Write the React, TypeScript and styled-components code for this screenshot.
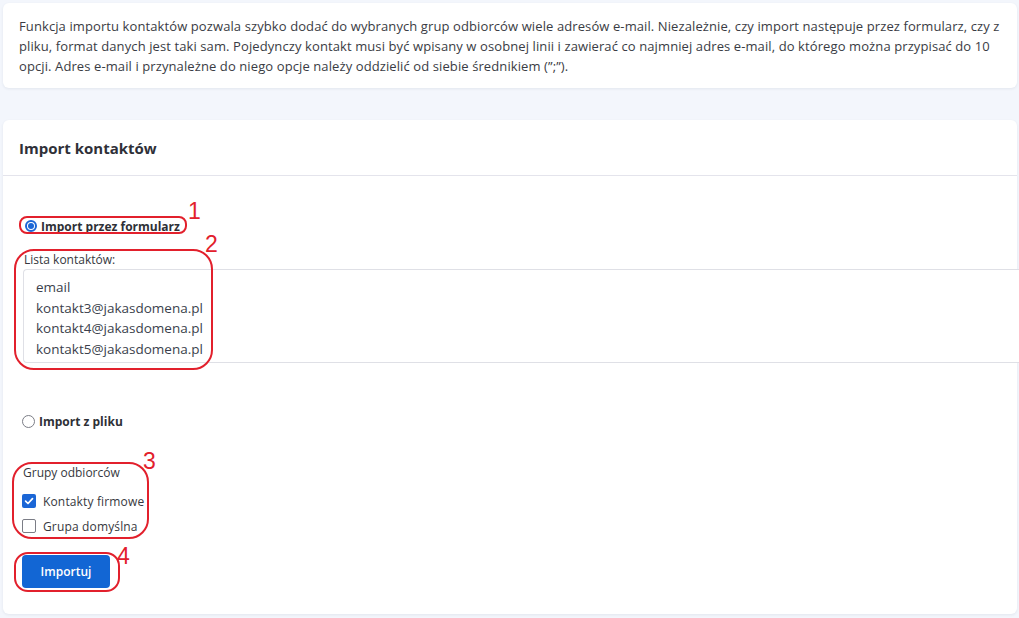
import React from "react";
import styled, { createGlobalStyle } from "styled-components";

const GlobalStyle = createGlobalStyle`
  html, body { margin: 0; padding: 0; }
  body {
    background: #f3f6fc;
    font-family: "Open Sans", "Noto Sans", "DejaVu Sans", sans-serif;
    color: #363840;
    overflow: hidden;
  }
  * { box-sizing: border-box; }
`;

const Page = styled.div`
  display: flex;
  flex-direction: column;
  gap: 32px;
  padding: 3px 2px 3px 3px;
`;

const Card = styled.section`
  background: #ffffff;
  border-radius: 6px;
  box-shadow: 0 1px 3px rgba(40, 50, 80, 0.08);
`;

const InfoCard = styled(Card)`
  padding: 13px 16px 12px;
`;

const InfoLine = styled.span`
  display: block;
  font-size: 13px;
  line-height: 20px;
  letter-spacing: 0.1px;
  white-space: nowrap;
  color: #3a3c44;
`;

const CardHeader = styled.header`
  height: 56px;
  display: flex;
  align-items: center;
  padding: 0 16px;
  border-bottom: 1px solid #e4e4ec;
`;

const CardTitle = styled.h2`
  margin: 0;
  font-size: 15px;
  font-weight: 700;
  color: #2f3038;
`;

const CardBody = styled.div`
  display: flex;
  flex-direction: column;
  align-items: flex-start;
  padding: 40px 0 26px 19px;
`;

const Annotated = styled.div<{ $mt?: number; $stretch?: boolean }>`
  position: relative;
  margin-top: ${(p) => p.$mt ?? 0}px;
  align-self: ${(p) => (p.$stretch ? "stretch" : "flex-start")};
`;

const Ring = styled.span<{ $t: number; $l: number; $w: number; $h: number; $r: number }>`
  position: absolute;
  top: ${(p) => p.$t}px;
  left: ${(p) => p.$l}px;
  width: ${(p) => p.$w}px;
  height: ${(p) => p.$h}px;
  border: 2px solid #e2202c;
  border-radius: ${(p) => p.$r}px;
  pointer-events: none;
`;

const Marker = styled.span<{ $t: number; $l: number }>`
  position: absolute;
  top: ${(p) => p.$t}px;
  left: ${(p) => p.$l}px;
  font-family: "Liberation Sans", Arial, sans-serif;
  font-size: 23px;
  line-height: 23px;
  color: #e2202c;
  pointer-events: none;
`;

const OptionRow = styled.label<{ $indent?: number }>`
  display: flex;
  align-items: center;
  gap: 4px;
  height: 20px;
  padding-left: ${(p) => p.$indent ?? 0}px;
  font-size: 12px;
  font-weight: 700;
  color: #2e3036;
`;

const RadioDot = styled.span<{ $checked?: boolean }>`
  width: ${(p) => (p.$checked ? 12 : 13)}px;
  height: ${(p) => (p.$checked ? 12 : 13)}px;
  border-radius: 50%;
  border: ${(p) => (p.$checked ? "2px solid #1b66d6" : "1.5px solid #7b7d86")};
  background: #fff;
  display: flex;
  align-items: center;
  justify-content: center;
  flex: none;
  &::after {
    content: "";
    display: ${(p) => (p.$checked ? "block" : "none")};
    width: 6px;
    height: 6px;
    border-radius: 50%;
    background: #1b66d6;
  }
`;

const FieldLabel = styled.div<{ $pl?: number }>`
  font-size: 12px;
  line-height: 16px;
  padding-left: ${(p) => p.$pl ?? 0}px;
  color: #363840;
`;

const ContactsArea = styled.textarea`
  display: block;
  width: calc(100% + 2px);
  height: 94px;
  margin: 1px 0 0 1px;
  padding: 7px 12px 6px;
  border: 1px solid #dfe0e6;
  border-right: none;
  border-radius: 4px 0 0 4px;
  font-family: "Open Sans", "Noto Sans", sans-serif;
  font-size: 13.5px;
  line-height: 20.5px;
  color: #3b3f4c;
  resize: none;
  overflow: hidden;
  outline: none;
  background: #fff;
`;

const GroupList = styled.div`
  display: flex;
  flex-direction: column;
  gap: 7px;
  margin-top: 11px;
`;

const CheckRow = styled.label`
  display: flex;
  align-items: center;
  gap: 7px;
  height: 18px;
  font-size: 12px;
  letter-spacing: 0.15px;
  color: #363840;
`;

const CheckBox = styled.span<{ $checked?: boolean }>`
  width: 14px;
  height: 14px;
  border-radius: 2px;
  flex: none;
  display: flex;
  align-items: center;
  justify-content: center;
  background: ${(p) => (p.$checked ? "#1b66d6" : "#fff")};
  border: ${(p) => (p.$checked ? "none" : "1.5px solid #7b7d86")};
`;

const PrimaryButton = styled.button`
  width: 88px;
  height: 33px;
  border: none;
  border-radius: 4px;
  background: #1266d4;
  color: #fff;
  font-family: "Open Sans", "Noto Sans", sans-serif;
  font-size: 12px;
  font-weight: 600;
  cursor: pointer;
`;

export default function App() {
  return (
    <>
      <GlobalStyle />
      <Page>
        <InfoCard>
          <InfoLine>
            Funkcja importu kontaktów pozwala szybko dodać do wybranych grup odbiorców wiele adresów e-mail. Niezależnie, czy import następuje przez formularz, czy z
          </InfoLine>
          <InfoLine>
            pliku, format danych jest taki sam. Pojedynczy kontakt musi być wpisany w osobnej linii i zawierać co najmniej adres e-mail, do którego można przypisać do 10
          </InfoLine>
          <InfoLine>
            opcji. Adres e-mail i przynależne do niego opcje należy oddzielić od siebie średnikiem (”;”).
          </InfoLine>
        </InfoCard>

        <Card>
          <CardHeader>
            <CardTitle>Import kontaktów</CardTitle>
          </CardHeader>
          <CardBody>
            <Annotated>
              <OptionRow $indent={3}>
                <RadioDot $checked />
                Import przez formularz
              </OptionRow>
              <Ring $t={0} $l={-3} $w={168} $h={18} $r={8} />
              <Marker $t={-16} $l={166}>1</Marker>
            </Annotated>

            <Annotated $mt={16} $stretch>
              <FieldLabel $pl={2}>Lista kontaktów:</FieldLabel>
              <ContactsArea
                readOnly
                defaultValue={"email\nkontakt3@jakasdomena.pl\nkontakt4@jakasdomena.pl\nkontakt5@jakasdomena.pl"}
              />
              <Ring $t={-3} $l={-8} $w={199} $h={121} $r={20} />
              <Marker $t={-19} $l={183}>2</Marker>
            </Annotated>

            <Annotated $mt={48}>
              <OptionRow>
                <RadioDot />
                Import z pliku
              </OptionRow>
            </Annotated>

            <Annotated $mt={34}>
              <FieldLabel $pl={1}>Grupy odbiorców</FieldLabel>
              <GroupList>
                <CheckRow>
                  <CheckBox $checked>
                    <svg width="10" height="10" viewBox="0 0 10 10" fill="none">
                      <path d="M1.6 5.2 L4 7.5 L8.5 2.6" stroke="#fff" strokeWidth="1.7" strokeLinecap="round" strokeLinejoin="round" />
                    </svg>
                  </CheckBox>
                  Kontakty firmowe
                </CheckRow>
                <CheckRow>
                  <CheckBox />
                  Grupa domyślna
                </CheckRow>
              </GroupList>
              <Ring $t={-3} $l={-10} $w={137} $h={77} $r={20} />
              <Marker $t={-15} $l={121}>3</Marker>
            </Annotated>

            <Annotated $mt={20}>
              <PrimaryButton>Importuj</PrimaryButton>
              <Ring $t={-3} $l={-8} $w={106} $h={40} $r={14} />
              <Marker $t={-10} $l={95}>4</Marker>
            </Annotated>
          </CardBody>
        </Card>
      </Page>
    </>
  );
}
